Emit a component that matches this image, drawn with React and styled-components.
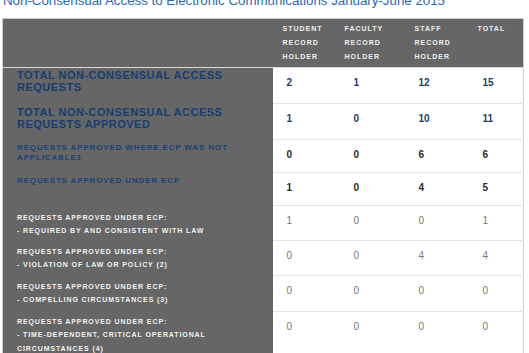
import React from "react";
import styled, { createGlobalStyle } from "styled-components";

const Global = createGlobalStyle`
  html, body { margin: 0; padding: 0; background: #fff; overflow: hidden; }
  body { font-family: "Liberation Sans", Arial, sans-serif; }
`;

const Page = styled.div`
  padding-left: 2px;
  width: 523px;
`;

const Title = styled.h2`
  margin: -7px 0 10px 1px;
  font-size: 13.3px;
  line-height: 15px;
  font-weight: normal;
  color: #2a69b3;
  white-space: nowrap;
`;

const Table = styled.table`
  border-collapse: collapse;
  table-layout: fixed;
  width: 522px;
  border: 1px solid #cfcfcf;
`;

const HeadRow = styled.tr`
  background: #666;
  border-bottom: 1px solid #d8d8d8;
  height: 49px;
`;

const HeadCell = styled.th`
  vertical-align: top;
  text-align: left;
  padding: 3px 0 0 ${(p) => p.$pad || 0}px;
  font-size: 7px;
  line-height: 14px;
  font-weight: bold;
  letter-spacing: 1px;
  color: #f0f0f0;
`;

const Row = styled.tr`
  height: ${(p) => p.$h}px;
`;

const Label = styled.td`
  background: #666;
  vertical-align: top;
  padding: ${(p) => p.$top}px 10px 0 14px;
  font-weight: bold;
  ${(p) =>
    p.$kind === "big" &&
    `font-size: 11px; line-height: 12px; letter-spacing: 0.5px; color: #173d70;`}
  ${(p) =>
    p.$kind === "mid" &&
    `font-size: 8px; line-height: 10px; letter-spacing: 0.85px; color: #1a4276;`}
  ${(p) =>
    p.$kind === "small" &&
    `font-size: 7px; line-height: 13.5px; letter-spacing: 0.9px; color: #f2f2f2;`}
`;

const Num = styled.td`
  background: #fff;
  vertical-align: top;
  border-bottom: 1px solid #e4e4e4;
  padding: 8.5px 0 0 14px;
  font-size: 10px;
  line-height: 12px;
  ${(p) => p.$tone === "blue" && `font-weight: bold; color: #1d3b66;`}
  ${(p) => p.$tone === "dark" && `font-weight: bold; color: #2a2a2a;`}
  ${(p) => p.$tone === "plain" && `font-weight: normal; color: #777;`}
`;

const heads = [
  { pad: 10, lines: ["STUDENT", "RECORD", "HOLDER"] },
  { pad: 5, lines: ["FACULTY", "RECORD", "HOLDER"] },
  { pad: 10, lines: ["STAFF", "RECORD", "HOLDER"] },
  { pad: 9, lines: ["TOTAL"] },
];

const rows = [
  { h: 36, kind: "big", top: 1, tone: "blue", label: ["TOTAL NON-CONSENSUAL ACCESS REQUESTS"], nums: [2, 1, 12, 15] },
  { h: 36, kind: "big", top: 2, tone: "blue", label: ["TOTAL NON-CONSENSUAL ACCESS REQUESTS APPROVED"], nums: [1, 0, 10, 11] },
  { h: 33, kind: "mid", top: 3, tone: "dark", label: ["REQUESTS APPROVED WHERE ECP WAS NOT APPLICABLE1"], nums: [0, 0, 6, 6] },
  { h: 33, kind: "mid", top: 3, tone: "dark", label: ["REQUESTS APPROVED UNDER ECP"], nums: [1, 0, 4, 5] },
  { h: 35, kind: "small", top: 5, tone: "plain", label: ["REQUESTS APPROVED UNDER ECP:", "- REQUIRED BY AND CONSISTENT WITH LAW"], nums: [1, 0, 0, 1] },
  { h: 35, kind: "small", top: 4, tone: "plain", label: ["REQUESTS APPROVED UNDER ECP:", "- VIOLATION OF LAW OR POLICY (2)"], nums: [0, 0, 4, 4] },
  { h: 36, kind: "small", top: 4, tone: "plain", label: ["REQUESTS APPROVED UNDER ECP:", "- COMPELLING CIRCUMSTANCES (3)"], nums: [0, 0, 0, 0] },
  { h: 50, kind: "small", top: 3, tone: "plain", label: ["REQUESTS APPROVED UNDER ECP:", "- TIME-DEPENDENT, CRITICAL OPERATIONAL CIRCUMSTANCES (4)"], nums: [0, 0, 0, 0] },
];

const widths = [270, 67, 65, 64, 55];

export default function App() {
  return (
    <>
      <Global />
      <Page>
        <Title>Non-Consensual Access to Electronic Communications January-June 2015</Title>
        <Table>
          <colgroup>
            {widths.map((w, i) => (
              <col key={i} style={{ width: w }} />
            ))}
          </colgroup>
          <thead>
            <HeadRow>
              <HeadCell />
              {heads.map((h, i) => (
                <HeadCell key={i} $pad={h.pad}>
                  {h.lines.map((l, j) => (
                    <div key={j}>{l}</div>
                  ))}
                </HeadCell>
              ))}
            </HeadRow>
          </thead>
          <tbody>
            {rows.map((r, i) => (
              <Row key={i} $h={r.h}>
                <Label $kind={r.kind} $top={r.top}>
                  {r.label.map((l, j) => (
                    <div key={j}>{l}</div>
                  ))}
                </Label>
                {r.nums.map((n, j) => (
                  <Num key={j} $tone={r.tone}>
                    {n}
                  </Num>
                ))}
              </Row>
            ))}
          </tbody>
        </Table>
      </Page>
    </>
  );
}
